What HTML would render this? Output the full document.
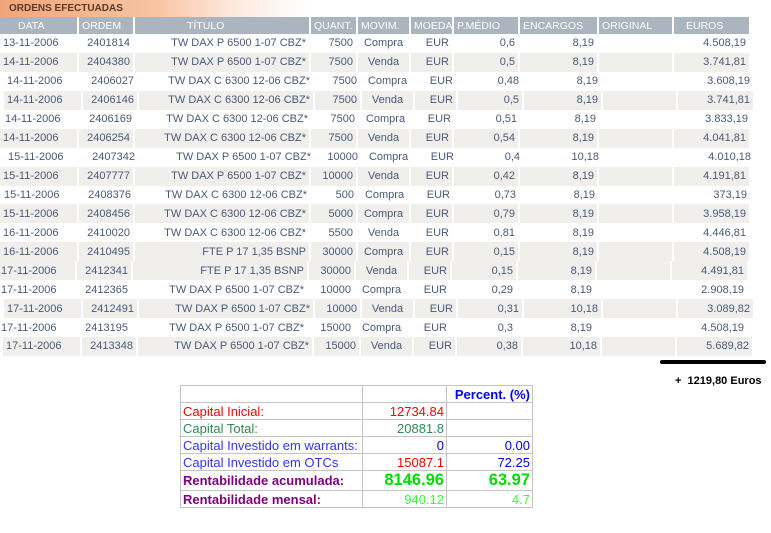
<!DOCTYPE html>
<html><head><meta charset="utf-8"><style>
body{margin:0;width:771px;height:533px;background:#fff;font-family:"Liberation Sans",Arial,sans-serif;position:relative;overflow:hidden}
.hdr{position:absolute;left:0;top:0;width:771px;height:17px;background:linear-gradient(90deg,#f2a57a 0%,#f7c4a2 20%,#fde8dc 30%,#fff 40%)}
.hdr span{position:absolute;left:9px;top:3px;font-size:10px;font-weight:bold;color:#5a3a2a}
table.o{position:absolute;left:0;top:17px;border-collapse:collapse;font-size:11px;color:#4a5a7a;table-layout:fixed;width:750px}
table.o th{background:#aab5bf;color:#fff;font-weight:normal;height:17px;padding:0 3px;text-align:left;border-right:2px solid #fff;font-size:10.5px}
table.o td{height:18.95px;padding:0 3px;text-align:right;border-right:2px solid #fff;white-space:nowrap}
table.o tr.g td{background:#f0efec}
table.o td.c{text-align:center}
table.o td.l{text-align:left}
.line{position:absolute;left:660px;top:360px;width:106px;height:4px;background:#000;border-radius:2px}
.tot{position:absolute;left:675px;top:375px;font-size:11px;font-weight:bold}
table.s{position:absolute;left:180px;top:385px;border-collapse:collapse;font-size:13px;table-layout:fixed;width:352px}
table.s td{border:1px solid #c4c4c4;padding:0 2px;height:16px;white-space:nowrap;overflow:hidden}
table.s td.r{text-align:right}
</style></head><body>
<div class="hdr"><span>ORDENS EFECTUADAS</span></div>
<table class="o">
<colgroup><col style="width:78px"><col style="width:56px"><col style="width:176px"><col style="width:47px"><col style="width:53px"><col style="width:43px"><col style="width:66px"><col style="width:79px"><col style="width:75px"><col style="width:77px"></colgroup>
<tr><th style="padding-left:18px">DATA</th><th>ORDEM</th><th style="padding-left:52px">TÍTULO</th><th>QUANT.</th><th>MOVIM.</th><th>MOEDA</th><th>P.MÉDIO</th><th>ENCARGOS</th><th>ORIGINAL</th><th style="padding-left:12px">EUROS</th></tr>
<tr><td class="l">13-11-2006</td><td>2401814</td><td>TW DAX P 6500 1-07 CBZ*</td><td>7500</td><td class="c">Compra</td><td>EUR</td><td>0,6</td><td>8,19</td><td></td><td>4.508,19</td></tr>
<tr class="g"><td class="l">14-11-2006</td><td>2404380</td><td>TW DAX P 6500 1-07 CBZ*</td><td>7500</td><td class="c">Venda</td><td>EUR</td><td>0,5</td><td>8,19</td><td></td><td>3.741,81</td></tr>
<tr style="transform:translateX(4px)"><td class="l">14-11-2006</td><td>2406027</td><td>TW DAX C 6300 12-06 CBZ*</td><td>7500</td><td class="c">Compra</td><td>EUR</td><td>0,48</td><td>8,19</td><td></td><td>3.608,19</td></tr>
<tr class="g" style="transform:translateX(4px)"><td class="l">14-11-2006</td><td>2406146</td><td>TW DAX C 6300 12-06 CBZ*</td><td>7500</td><td class="c">Venda</td><td>EUR</td><td>0,5</td><td>8,19</td><td></td><td>3.741,81</td></tr>
<tr style="transform:translateX(2px)"><td class="l">14-11-2006</td><td>2406169</td><td>TW DAX C 6300 12-06 CBZ*</td><td>7500</td><td class="c">Compra</td><td>EUR</td><td>0,51</td><td>8,19</td><td></td><td>3.833,19</td></tr>
<tr class="g"><td class="l">14-11-2006</td><td>2406254</td><td>TW DAX C 6300 12-06 CBZ*</td><td>7500</td><td class="c">Venda</td><td>EUR</td><td>0,54</td><td>8,19</td><td></td><td>4.041,81</td></tr>
<tr style="transform:translateX(5px)"><td class="l">15-11-2006</td><td>2407342</td><td>TW DAX P 6500 1-07 CBZ*</td><td>10000</td><td class="c">Compra</td><td>EUR</td><td>0,4</td><td>10,18</td><td></td><td>4.010,18</td></tr>
<tr class="g"><td class="l">15-11-2006</td><td>2407777</td><td>TW DAX P 6500 1-07 CBZ*</td><td>10000</td><td class="c">Venda</td><td>EUR</td><td>0,42</td><td>8,19</td><td></td><td>4.191,81</td></tr>
<tr style="transform:translateX(1px)"><td class="l">15-11-2006</td><td>2408376</td><td>TW DAX C 6300 12-06 CBZ*</td><td>500</td><td class="c">Compra</td><td>EUR</td><td>0,73</td><td>8,19</td><td></td><td>373,19</td></tr>
<tr class="g"><td class="l">15-11-2006</td><td>2408456</td><td>TW DAX C 6300 12-06 CBZ*</td><td>5000</td><td class="c">Compra</td><td>EUR</td><td>0,79</td><td>8,19</td><td></td><td>3.958,19</td></tr>
<tr><td class="l">16-11-2006</td><td>2410020</td><td>TW DAX C 6300 12-06 CBZ*</td><td>5500</td><td class="c">Venda</td><td>EUR</td><td>0,81</td><td>8,19</td><td></td><td>4.446,81</td></tr>
<tr class="g"><td class="l">16-11-2006</td><td>2410495</td><td>FTE P 17 1,35 BSNP</td><td>30000</td><td class="c">Compra</td><td>EUR</td><td>0,15</td><td>8,19</td><td></td><td>4.508,19</td></tr>
<tr class="g" style="transform:translateX(-2px)"><td class="l">17-11-2006</td><td>2412341</td><td>FTE P 17 1,35 BSNP</td><td>30000</td><td class="c">Venda</td><td>EUR</td><td>0,15</td><td>8,19</td><td></td><td>4.491,81</td></tr>
<tr style="transform:translateX(-2px)"><td class="l">17-11-2006</td><td>2412365</td><td>TW DAX P 6500 1-07 CBZ*</td><td>10000</td><td class="c">Compra</td><td>EUR</td><td>0,29</td><td>8,19</td><td></td><td>2.908,19</td></tr>
<tr class="g" style="transform:translateX(4px)"><td class="l">17-11-2006</td><td>2412491</td><td>TW DAX P 6500 1-07 CBZ*</td><td>10000</td><td class="c">Venda</td><td>EUR</td><td>0,31</td><td>10,18</td><td></td><td>3.089,82</td></tr>
<tr style="transform:translateX(-2px)"><td class="l">17-11-2006</td><td>2413195</td><td>TW DAX P 6500 1-07 CBZ*</td><td>15000</td><td class="c">Compra</td><td>EUR</td><td>0,3</td><td>8,19</td><td></td><td>4.508,19</td></tr>
<tr class="g" style="transform:translateX(3px)"><td class="l">17-11-2006</td><td>2413348</td><td>TW DAX P 6500 1-07 CBZ*</td><td>15000</td><td class="c">Venda</td><td>EUR</td><td>0,38</td><td>10,18</td><td></td><td>5.689,82</td></tr>
</table>
<div class="line"></div>
<div class="tot">+&nbsp; 1219,80 Euros</div>
<table class="s">
<colgroup><col style="width:182px"><col style="width:84px"><col style="width:86px"></colgroup>
<tr><td></td><td></td><td class="r" style="color:#0000ff;font-weight:bold">Percent. (%)</td></tr>
<tr><td style="color:#ff0000">Capital Inicial:</td><td class="r" style="color:#ff0000">12734.84</td><td></td></tr>
<tr><td style="color:#2e8b57">Capital Total:</td><td class="r" style="color:#2e8b57">20881.8</td><td></td></tr>
<tr><td style="color:#3333ff">Capital Investido em warrants:</td><td class="r" style="color:#0000ff">0</td><td class="r" style="color:#0000ff">0.00</td></tr>
<tr><td style="color:#3333ff">Capital Investido em OTCs</td><td class="r" style="color:#ff0000">15087.1</td><td class="r" style="color:#0000ff">72.25</td></tr>
<tr><td style="color:#800080;font-weight:bold;height:19px">Rentabilidade acumulada:</td><td class="r" style="color:#00dd00;font-weight:bold;font-size:16.5px">8146.96</td><td class="r" style="color:#00dd00;font-weight:bold;font-size:16.5px">63.97</td></tr>
<tr><td style="color:#800080;font-weight:bold">Rentabilidade mensal:</td><td class="r" style="color:#33ff33">940.12</td><td class="r" style="color:#33ff33">4.7</td></tr>
</table>
</body></html>
